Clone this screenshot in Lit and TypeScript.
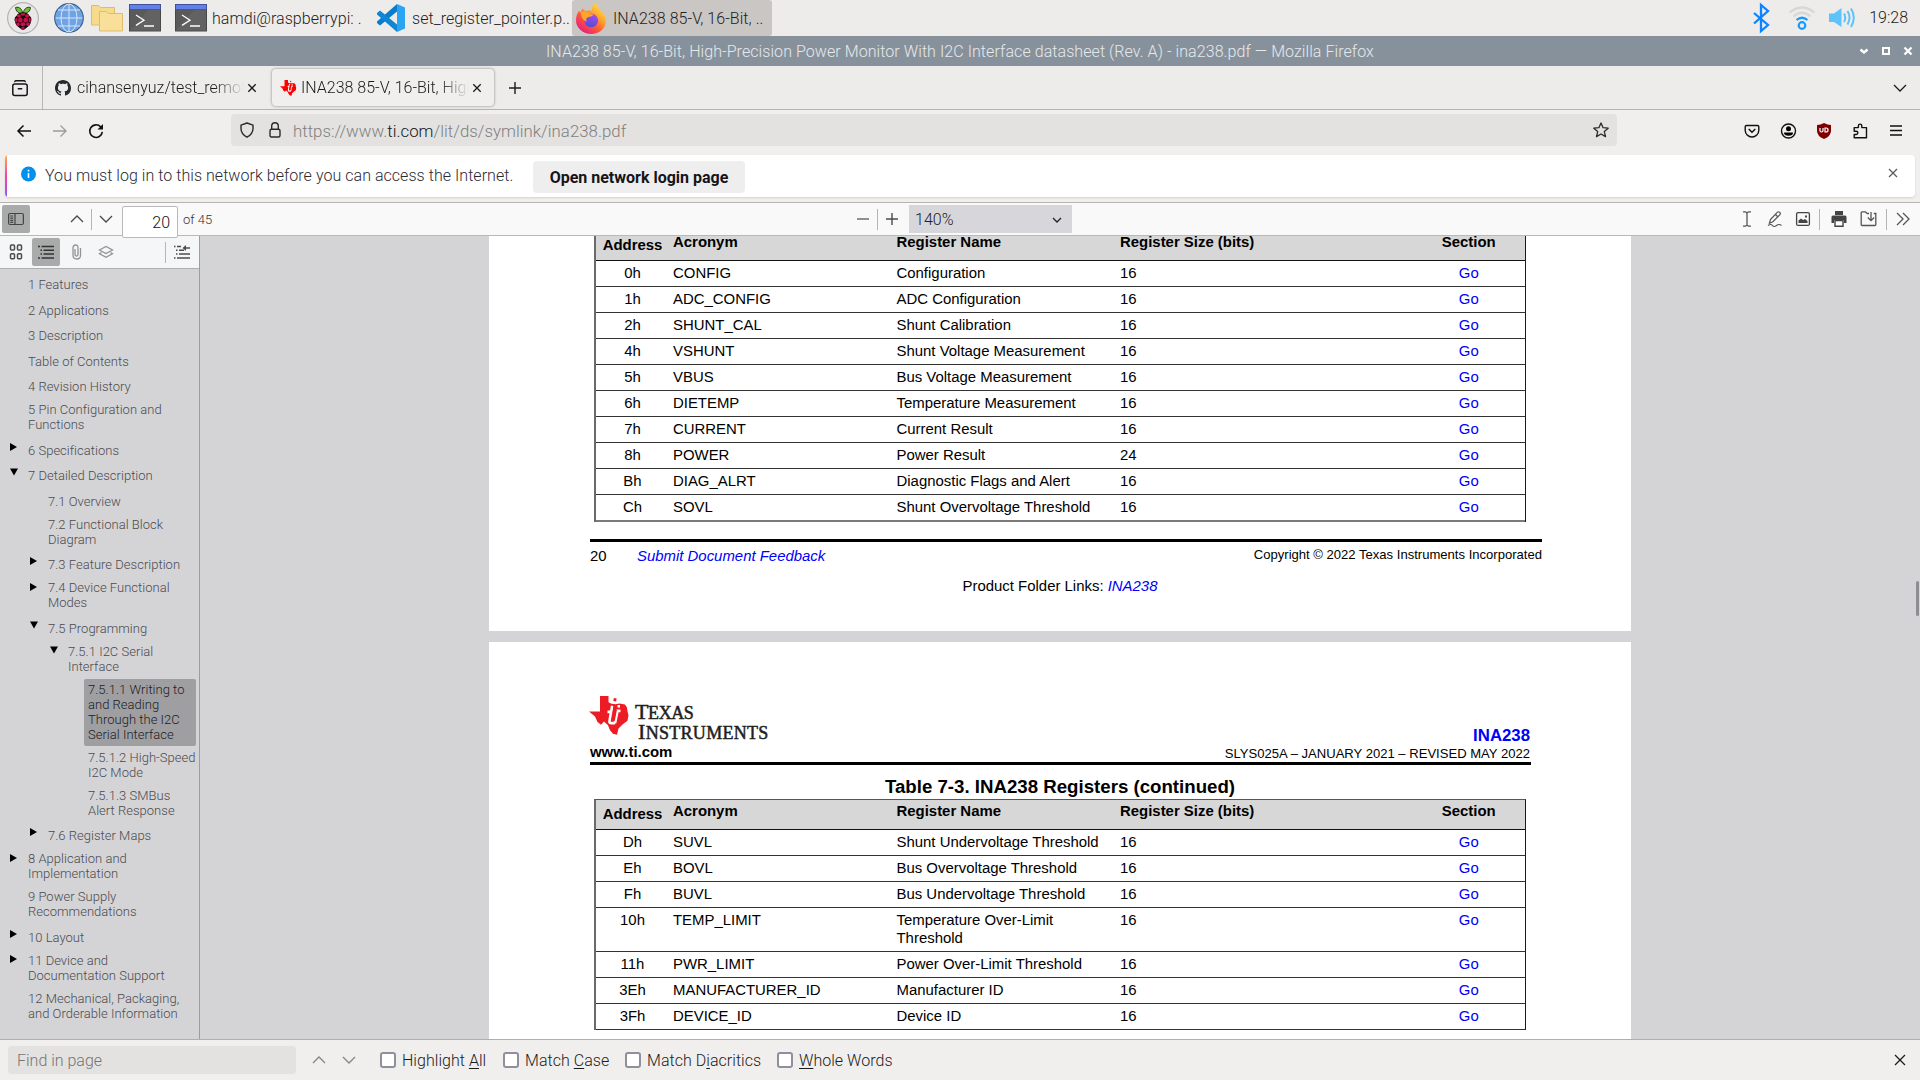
import { LitElement, html, svg, css, nothing } from "lit";
import { customElement } from "lit/decorators.js";
import { classMap } from "lit/directives/class-map.js";

type Row = [string, string, string, string];

const firstPageRows: Row[] = [
  ["0h", "CONFIG", "Configuration", "16"],
  ["1h", "ADC_CONFIG", "ADC Configuration", "16"],
  ["2h", "SHUNT_CAL", "Shunt Calibration", "16"],
  ["4h", "VSHUNT", "Shunt Voltage Measurement", "16"],
  ["5h", "VBUS", "Bus Voltage Measurement", "16"],
  ["6h", "DIETEMP", "Temperature Measurement", "16"],
  ["7h", "CURRENT", "Current Result", "16"],
  ["8h", "POWER", "Power Result", "24"],
  ["Bh", "DIAG_ALRT", "Diagnostic Flags and Alert", "16"],
  ["Ch", "SOVL", "Shunt Overvoltage Threshold", "16"],
];

const secondPageRows: Row[] = [
  ["Dh", "SUVL", "Shunt Undervoltage Threshold", "16"],
  ["Eh", "BOVL", "Bus Overvoltage Threshold", "16"],
  ["Fh", "BUVL", "Bus Undervoltage Threshold", "16"],
  ["10h", "TEMP_LIMIT", "Temperature Over-Limit\nThreshold", "16"],
  ["11h", "PWR_LIMIT", "Power Over-Limit Threshold", "16"],
  ["3Eh", "MANUFACTURER_ID", "Manufacturer ID", "16"],
  ["3Fh", "DEVICE_ID", "Device ID", "16"],
];

interface OutlineItem {
  text: string;
  level: number;
  arrow?: "right" | "down";
  selected?: boolean;
}

const outline: OutlineItem[] = [
  { text: "1 Features", level: 0 },
  { text: "2 Applications", level: 0 },
  { text: "3 Description", level: 0 },
  { text: "Table of Contents", level: 0 },
  { text: "4 Revision History", level: 0 },
  { text: "5 Pin Configuration and\nFunctions", level: 0 },
  { text: "6 Specifications", level: 0, arrow: "right" },
  { text: "7 Detailed Description", level: 0, arrow: "down" },
  { text: "7.1 Overview", level: 1 },
  { text: "7.2 Functional Block\nDiagram", level: 1 },
  { text: "7.3 Feature Description", level: 1, arrow: "right" },
  { text: "7.4 Device Functional\nModes", level: 1, arrow: "right" },
  { text: "7.5 Programming", level: 1, arrow: "down" },
  { text: "7.5.1 I2C Serial\nInterface", level: 2, arrow: "down" },
  { text: "7.5.1.1 Writing to\nand Reading\nThrough the I2C\nSerial Interface", level: 3, selected: true },
  { text: "7.5.1.2 High-Speed\nI2C Mode", level: 3 },
  { text: "7.5.1.3 SMBus\nAlert Response", level: 3 },
  { text: "7.6 Register Maps", level: 1, arrow: "right" },
  { text: "8 Application and\nImplementation", level: 0, arrow: "right" },
  { text: "9 Power Supply\nRecommendations", level: 0 },
  { text: "10 Layout", level: 0, arrow: "right" },
  { text: "11 Device and\nDocumentation Support", level: 0, arrow: "right" },
  { text: "12 Mechanical, Packaging,\nand Orderable Information", level: 0 },
];

const icon = (size: number, body: unknown, cls = "") =>
  html`<svg class="ic ${cls}" width=${size} height=${size} viewBox="0 0 ${size} ${size}">${body}</svg>`;

const raspberry = icon(32, svg`
  <circle cx="16" cy="16" r="15.4" fill="#e9e8e8" stroke="#b4b4b6" stroke-width="1.2"/>
  <g stroke="#11220a" stroke-width=".8" fill="#6cbf3b">
    <path d="M15.6 11.6C12 12 8.400 9 8.600 5.400C12 4.600 15.400 6.600 15.600 11.600z"/>
    <path d="M16.400 11.600C20 12 23.600 9 23.400 5.400C20 4.600 16.600 6.600 16.400 11.600z"/>
  </g>
  <path d="M16 10.200c3 0 5.600 1.200 6.400 3.600 2.200 1.200 2.600 4 1.500 6-.2 3-2.400 4.600-4 5.600-1.200.9-2.500 2.400-3.900 2.400s-2.700-1.500-3.900-2.400c-1.600-1-3.800-2.600-4-5.600-1.100-2-.7-4.800 1.500-6 .8-2.400 3.400-3.600 6.400-3.600z" fill="#14080c"/>
  <g fill="#c7114a">
    <ellipse cx="16" cy="12.300" rx="2.400" ry="1.400"/><ellipse cx="11.900" cy="14" rx="2.100" ry="1.700"/><ellipse cx="20.100" cy="14" rx="2.100" ry="1.700"/>
    <ellipse cx="13.300" cy="18" rx="2.400" ry="2.500"/><ellipse cx="18.700" cy="18" rx="2.400" ry="2.500"/>
    <ellipse cx="9.300" cy="18" rx="1.200" ry="2.300"/><ellipse cx="22.700" cy="18" rx="1.200" ry="2.300"/>
    <ellipse cx="11" cy="22.200" rx="1.700" ry="2"/><ellipse cx="21" cy="22.200" rx="1.700" ry="2"/>
    <ellipse cx="16" cy="22.300" rx="2.500" ry="2.100"/><ellipse cx="16" cy="26" rx="1.900" ry="1.100"/>
  </g>`);

const globe = icon(30, svg`
  <circle cx="15" cy="15" r="14.300" fill="#6fa4e4" stroke="#40618f" stroke-width="1.200"/>
  <g fill="none" stroke="#d6e6fa" stroke-width="1">
    <path d="M15 1v28M1.500 15h27M4 7h22M4 23h22"/>
    <ellipse cx="15" cy="15" rx="8" ry="14"/>
  </g>`);

const folders = icon(32, svg`
  <g fill="#f6db8c" stroke="#dfbc6c" stroke-width="1">
    <path d="M.5 3.500h7l2 2h14v17.500h-23z"/>
    <path d="M8.500 9.500h7l2 2h14v17.500h-23z" fill="#f9e09a"/>
  </g>`);

const terminal = icon(32, svg`
  <rect x=".5" y="2.500" width="31" height="26.500" fill="#5a5a5a" stroke="#484848"/>
  <path d="M1 28.500L20 7h11v21.500z" fill="#626262"/>
  <rect x=".5" y="2.500" width="31" height="5" fill="#6080ee" stroke="#3d4f96" stroke-width=".8"/>
  <path d="M7 13l8 5.200-8 5.200M15 24h10" fill="none" stroke="#fff" stroke-width="1.300"/>`);

const vscode = icon(30, svg`
  <path d="M21 1l8 3.500v21L21 29z" fill="#2aa5f2"/>
  <path d="M21 1v7.500L4 22.500 1 20v-1.500z" fill="#0a7ccb"/>
  <path d="M21 29v-7.500L4 7.500 1 10v1.500z" fill="#0d86d6"/>`);

const firefox = icon(32, svg`
  <defs>
    <linearGradient id="ffa" x1="1" y1="0" x2=".2" y2="1"><stop offset="0" stop-color="#fff44f"/><stop offset=".35" stop-color="#ffb22e"/><stop offset=".65" stop-color="#ff5a36"/><stop offset="1" stop-color="#e31587"/></linearGradient>
    <linearGradient id="ffb" x1=".7" y1="0" x2=".3" y2="1"><stop offset="0" stop-color="#a94be8"/><stop offset="1" stop-color="#4b4ed8"/></linearGradient>
  </defs>
  <path d="M20 .8c2.300 1.700 3.600 4.500 4 6.800 4 2.500 7 6.200 7 11.200C31 26.500 24.500 32 16.300 32S1 26.300 1 18.300C1 14 2.500 10.700 4.500 8.500c0 1 .3 1.700.9 2.300L7.500 6.500c.8 1.200 2 2.200 3.700 2.500 2-.6 4-.5 5.500 0C17 5.500 18 2.800 20 .8z" fill="url(#ffa)"/>
  <circle cx="16.300" cy="18.500" r="6.800" fill="url(#ffb)"/>
  <path d="M6 10c3-1.500 7-.5 8.500 1.500l4 1.200c-1 1.500-3 2-5 2.300-2.500.6-3 3-1.500 5-4-1.500-6-5-6-10z" fill="#ffa52c"/>`);

const bluetooth = icon(28, svg`<path d="M7 9l14 12-7 6V1l7 6L7 19.500" fill="none" stroke="#0a84ff" stroke-width="2.300"/>`);
const wifi = icon(28, svg`
  <g fill="none" stroke-width="2.200">
    <path d="M1.500 8.500Q14-1.500 26.500 8.500" stroke="#d8d7d5"/><path d="M5.500 12.500Q14 5 22.500 12.500" stroke="#d8d7d5"/>
    <path d="M8.500 16q5.500-4.500 11 0" stroke="#159bff"/><circle cx="14" cy="21.500" r="3.300" stroke="#159bff"/>
  </g>`);
const speaker = icon(28, svg`
  <path d="M1 9.500h5L13.500 4v19L6 18H1z" fill="#5cc3fb"/>
  <path d="M16 9.500q2.500 4.300 0 8.500M19.500 7q4 6.500 0 13.500M23 4.500q5.500 9 0 18.500" fill="none" stroke="#5cc3fb" stroke-width="2"/>`);

const chevron = (dir: "up" | "down", size = 16) =>
  icon(16, svg`<path d=${dir === "down" ? `M${8 - size / 2} ${8 - size / 4}l${size / 2} ${size / 2} ${size / 2}-${size / 2}` : `M${8 - size / 2} ${8 + size / 4}l${size / 2}-${size / 2} ${size / 2} ${size / 2}`} fill="none" stroke="currentColor" stroke-width="1.300"/>`);

const cross = (r: number) =>
  icon(16, svg`<path d="M${8 - r} ${8 - r}L${8 + r} ${8 + r}M${8 + r} ${8 - r}L${8 - r} ${8 + r}" stroke="currentColor" stroke-width="1.300"/>`);

const plus = icon(16, svg`<path d="M2 8h12M8 2v12" stroke="currentColor" stroke-width="1.400"/>`);
const minus = icon(16, svg`<path d="M2 8h12" stroke="currentColor" stroke-width="1.200"/>`);

const github = icon(16, svg`<path fill="#24292f" d="M8 0C3.580 0 0 3.580 0 8c0 3.540 2.290 6.530 5.470 7.590.4.070.550-.170.550-.380 0-.190-.010-.820-.010-1.490-2.010.370-2.530-.490-2.690-.940-.090-.230-.480-.940-.820-1.130-.280-.150-.680-.520-.010-.530.630-.010 1.080.580 1.230.820.720 1.210 1.870.870 2.330.660.070-.520.280-.870.510-1.070-1.780-.200-3.640-.890-3.640-3.950 0-.870.310-1.590.820-2.150-.080-.200-.360-1.020.080-2.120 0 0 .670-.210 2.200.820.640-.180 1.320-.270 2-.270s1.360.090 2 .270c1.530-1.040 2.200-.820 2.200-.820.440 1.100.160 1.920.080 2.120.510.560.820 1.270.820 2.150 0 3.070-1.870 3.750-3.650 3.950.290.250.540.730.540 1.480 0 1.070-.010 1.930-.010 2.200 0 .210.150.460.550.380A8.010 8.010 0 0 0 16 8c0-4.420-3.580-8-8-8z"/>`);

/* Outline of the state of Texas carrying the "ti" mark. */
const texas = (w: number, h: number, red: string) => html`<svg class="ic" width=${w} height=${h} viewBox="0 0 39 38" preserveAspectRatio="none">
  <path fill=${red} d="M11 0h8.500v6l3 1.500 4 .5 4-.800 5.500 1 2 3 .5 4 1 3.500-1 5.500-5 3.500-4 4-1.500 6-4-.8-3-3.500-2-5-4-3.500-3 3-3.500-2.500L6 20l-6-5h11z"/>
  <path fill="none" stroke="#fff" stroke-width="2.600" d="M23.200 9.500l-2.700 14.500q-.5 2.500 2 2.500h3.500M18.500 15.500h4M31 10h-2.500M31.500 14.500h-3l-2.500 12"/>
  <path fill="none" stroke=${red} stroke-width="1.400" d="M25.500 9l-2.300 14.500h2l2-10"/>
  <path fill="none" stroke=${red} stroke-width="2.800" d="M26.200 2.200l-.5 3"/>
</svg>`;

@customElement("app-root")
export class AppRoot extends LitElement {
  static styles = css`
    :host {
      display: flex;
      flex-direction: column;
      width: 1920px;
      height: 1080px;
      overflow: hidden;
      box-sizing: border-box;
      font: 300 16px/20px Roboto, "Liberation Sans", sans-serif;
      color: #1b1b1c;
      background: #f0efed;
      white-space: nowrap;
    }
    * { box-sizing: border-box; }
    .ic { display: block; flex: none; overflow: visible; }
    .grow { flex: 1; }

    .taskbar { height: 36px; flex: none; display: flex; align-items: center; background: #edecea; padding: 0 12px 0 7px; color: #222; }
    .launch { display: flex; align-items: center; width: 168px; flex: none; }
    .slot1 { width: 47px; } .slot2 { width: 37px; } .slot3 { width: 38px; }
    .task { display: flex; align-items: center; height: 36px; gap: 5px; flex: none; }
    .task.t1 { width: 200px; }
    .task.t2 { width: 197px; padding-left: 1px; gap: 6px; }
    .task.t3 { width: 200px; padding-left: 3px; gap: 6px; background: #cac6c3; border-radius: 3px; }
    .task span { position: relative; top: 1px; letter-spacing: .05px; }
    .tray { display: flex; align-items: center; }
    .tray .w1 { width: 41px; } .tray .w2 { width: 40px; } .tray .w3 { width: 41px; }

    .titlebar { height: 30px; flex: none; background: #87919b; color: #e6e9ec; display: grid; grid-template-columns: 100px 1fr 100px; align-items: center; }
    .titlebar .name { text-align: center; padding-top: 1px; letter-spacing: .073px; }
    .wm { display: flex; justify-content: flex-end; gap: 6px; padding-right: 4px; color: #fff; }

    .tabs { height: 44px; flex: none; display: flex; align-items: center; background: #edecea; border-bottom: 1px solid #b4b3af; }
    .recent { width: 43px; height: 43px; border-right: 1px solid #b8b7b5; padding: 14px 0 0 12px; flex: none; }
    .tab { height: 37px; display: flex; align-items: center; flex: none; border-radius: 4px; }
    .tab.idle { width: 229px; padding-left: 12px; }
    .tab.on { width: 222px; padding-left: 8px; background: #f0efee; box-shadow: 0 0 3px rgba(0,0,0,.45); }
    .tab .label { width: 167px; margin-left: 6px; padding-top: 1px; overflow: hidden; -webkit-mask-image: linear-gradient(to right, #000 82%, transparent); mask-image: linear-gradient(to right, #000 82%, transparent); }
    .tab.on .label { width: 168px; margin-left: 5px; }
    .tabs .new { margin-left: 13px; }
    .tabs .all { margin-right: 12px; }

    .nav { height: 45px; flex: none; display: flex; align-items: flex-start; padding: 4px 16px 0; background: #f0efed; }
    .nav .btn { height: 33px; display: flex; align-items: center; width: 36px; flex: none; }
    .nav .btn.dim { color: #9d9c9b; }
    .url { margin-left: 107px; width: 1386px; height: 32px; border-radius: 4px; background: #e3e2e0; display: flex; align-items: center; padding: 0 8px; flex: none; color: #222; }
    .url .addr { margin-left: 10px; padding-top: 2px; font-size: 16.800px; letter-spacing: .03px; color: #807f7e; }
    .url b { font-weight: 300; color: #151515; }
    .url .lock { margin-left: 12px; }
    .nav .side { margin-left: 127px; display: flex; }

    .notice { margin: 0 5px; width: 1910px; height: 42px; flex: none; display: flex; background: #fff; border-radius: 4px; box-shadow: 0 1px 2px rgba(0,0,0,.12); overflow: hidden; }
    .stripe { width: 2px; background: linear-gradient(#ffb04a, #fa3fa0 50%, #9059ff); }
    .notice .info { margin: 11px 0 0 14px; }
    .notice .msg { margin: 11px 0 0 8px; width: 488px; color: #2b2a33; font-size: 16px; letter-spacing: .045px; flex: none; }
    .notice .login { margin-top: 6px; width: 212px; height: 32px; border-radius: 4px; background: #eeeeee; text-align: center; line-height: 33px; font-weight: 700; font-size: 16px; color: #15141a; }
    .notice .x { margin: 10px 14px 0 0; color: #5b5b60; }

    .viewer { margin-top: 5px; height: 837px; flex: none; border-top: 1px solid #b5b5ae; display: flex; flex-direction: column; }
    .pdfbar { height: 33px; flex: none; display: flex; align-items: center; background: #f9f9fa; border-bottom: 1px solid #b8b8b8; padding: 0 9px 0 2px; color: #4a4a4a; position: relative; z-index: 2; }
    .toggle { width: 28px; height: 28px; background: #a9aaaa; border-radius: 2px; display: grid; place-items: center; }
    .pdfbar .up { margin-left: 39px; }
    .sep { width: 1px; height: 21px; background: #b5b5b8; flex: none; }
    .page-no { margin-left: 8px; width: 56px; height: 32px; align-self: flex-start; margin-top: 3px; margin-bottom: -3px; border: 1px solid #b9b9bb; border-radius: 2px; background: #fff; text-align: right; padding: 6px 7px 0 0; color: #111; flex: none; font-size: 16px; }
    .of { margin-left: 5px; padding-top: 2px; font-size: 13px; color: #333; width: 672px; }
    .zoom { margin-left: 9px; width: 163px; height: 28px; background: #d7d7db; display: flex; align-items: center; justify-content: space-between; padding: 1px 7px 0 6px; color: #222; }
    .pdfbar .tools { display: flex; align-items: center; }
    .gap6 { margin-left: 6px; } .gap8 { margin-left: 8px; } .gap11 { margin-left: 11px; } .gap12 { margin-left: 12px; } .gap13 { margin-left: 13px; } .gap14 { margin-left: 14px; }

    .body { flex: 1; display: flex; min-height: 0; background: #d4d4d7; }
    .sidebar { width: 200px; flex: none; border-right: 1px solid #9d9da0; display: flex; flex-direction: column; }
    .sidebar-bar { height: 33px; flex: none; border-bottom: 1px solid #aeafb1; background: #f5f6f7; display: flex; align-items: center; color: #4c4c4c; padding: 0 9px 0 8px; }
    .sidebar-bar .toggle { margin-left: 8px; }
    .tree { display: flex; flex-direction: column; padding-top: 3px; font-size: 13px; line-height: 15px; color: #4b4b4e; white-space: pre; }
    .node { display: flex; padding-bottom: .5px; flex: none; }
    .node.l0 { padding-left: 8px; } .node.l1 { padding-left: 28px; } .node.l2 { padding-left: 48px; } .node.l3 { padding-left: 68px; }
    .arrow { width: 16px; flex: none; padding: 5px 0 0 2px; color: #000; }
    .node a { flex: 1; padding: 5px 0 5px 4px; margin-right: 3px; border-radius: 2px; letter-spacing: .02px; }
    .node.multi a { padding: 2.500px 0 4.500px 4px; margin-bottom: .5px; }
    .node.sel a { background: #9f9fa2; color: #202022; height: 67px; }

    .canvas { flex: 1; display: flex; flex-direction: column; align-items: center; gap: 11px; position: relative; font-family: "Liberation Sans", Arial, sans-serif; font-weight: 400; color: #000; overflow: hidden; font-size: 14.930px; line-height: 18px; }
    .page { width: 1142px; background: #fff; flex: none; }
    .p1 { height: 395px; padding: 0 0 0 101px; }
    .p2 { height: 397px; padding: 54px 0 0 101px; overflow: hidden; }
    .thumb { position: absolute; right: 1px; top: 345px; width: 3px; height: 35px; border-radius: 2px; background: #8e8e92; }
    .table { width: 932px; margin-left: 4px; border: solid #1a1a1a; border-width: 0 1px 0 2px; border-left-color: #6a6a6a; }
    .p2 .table { border-top: 1px solid #555; }
    .tr { display: grid; grid-template-columns: 73px 223.500px 223.500px 296.500px 1fr; height: 26px; border-bottom: 1px solid #333; padding-top: 3px; flex: none; }
    .p1 .tr:last-child { height: 27px; border-bottom: 2px solid #7a7a7a; }
    .tr > * { padding-left: 4px; white-space: pre; }
    .tr > :first-child { text-align: center; padding-left: 0; }
    .tr > :last-child { text-align: center; padding-left: 0; color: #0000fa; }
    .tr.tall { height: 44px; }
    .tr.th { font-weight: 700; background: #d7d7d7; height: 25px; padding-top: 0; border-color: #111; }
    .tr.th > :last-child { color: #000; }
    .p1 .th > * { margin-top: -3px; }
    .p1 .th > :first-child { margin-top: 0; }
    .p2 .tr.th { height: 30px; padding-top: 2px; }
    .p2 .th > :first-child { margin-top: 3px; }
    .rule { height: 3px; background: #000; }
    .p1 .rule { width: 952px; margin-top: 17px; }
    .foot { width: 952px; display: flex; padding-top: 5px; }
    .foot .n { width: 47px; }
    .foot .copy { font-size: 13.070px; margin-top: -1px; }
    .blue { color: #0000fa; }
    .it { font-style: italic; }
    .links { width: 940px; text-align: center; margin-top: 12px; }

    .brand { width: 941px; height: 66px; display: flex; justify-content: space-between; padding-right: 1px; }
    .logo { display: flex; height: 44px; margin-left: -1px; }
    .logo .words { font: 400 22px/20px "Liberation Serif", serif; color: #231f20; margin: 6px 0 0 7px; -webkit-text-stroke: .5px #231f20; letter-spacing: .2px; }
    .logo .small { font-size: 18px; }
    .logo .first { letter-spacing: -.4px; }
    .logo .second { margin: -1px 0 0 3px; letter-spacing: .3px; }
    .site { font-weight: 700; margin-top: 3px; }
    .docref { text-align: right; padding-top: 31px; font-size: 13.070px; }
    .docref b { display: block; font-size: 16.800px; line-height: 18px; }
    .p2 .rule { width: 941px; }
    .caption { width: 940px; text-align: center; font-weight: 700; font-size: 18.670px; line-height: 22px; padding-top: 11px; height: 34px; }

    .find { height: 41px; flex: none; border-top: 1px solid #b0afab; background: #f0efed; display: flex; align-items: center; padding: 0 12px 0 8px; }
    .find .box { width: 288px; height: 28px; border-radius: 4px; background: #e3e2e0; color: #767574; padding: 5px 9px; }
    .find .arrows { display: flex; gap: 14px; margin-left: 15px; width: 69px; color: #868584; }
    .check { display: flex; align-items: center; gap: 6px; letter-spacing: .04px; }
    .check i { width: 16px; height: 16px; border: 2px solid #8f8f9d; border-radius: 3px; background: #fff; }
    .check span { padding-top: 2px; }
    .c1 { width: 123px; } .c2 { width: 122px; } .c3 { width: 152px; }
    .check u { text-underline-offset: 2px; text-decoration-thickness: 1px; }
  `;

  private node(item: OutlineItem) {
    const multi = item.text.includes("\n");
    const arrow = item.arrow === "right"
      ? html`<svg class="ic" width="8" height="8"><path d="M0 0l7 4-7 4z" fill="#000"/></svg>`
      : item.arrow === "down"
        ? html`<svg class="ic" width="8" height="8"><path d="M0 .5h8l-4 7z" fill="#000"/></svg>`
        : nothing;
    return html`<div class=${classMap({ node: true, multi, sel: !!item.selected, ["l" + item.level]: true })}><span class="arrow">${arrow}</span><a>${item.text}</a></div>`;
  }

  private table(rows: Row[]) {
    return html`<div class="table">
      <div class="tr th"><span>Address</span><span>Acronym</span><span>Register Name</span><span>Register Size (bits)</span><span>Section</span></div>
      ${rows.map((r) => html`<div class=${classMap({ tr: true, tall: r[2].includes("\n") })}><span>${r[0]}</span><span>${r[1]}</span><span>${r[2]}</span><span>${r[3]}</span><span>Go</span></div>`)}
    </div>`;
  }

  render() {
    return html`
      <div class="taskbar">
        <div class="launch">
          <div class="slot1">${raspberry}</div><div class="slot2">${globe}</div><div class="slot3">${folders}</div>${terminal}
        </div>
        <div class="task t1">${terminal}<span>hamdi@raspberrypi: .</span></div>
        <div class="task t2">${vscode}<span>set_register_pointer.p..</span></div>
        <div class="task t3">${firefox}<span>INA238 85-V, 16-Bit, ..</span></div>
        <div class="grow"></div>
        <div class="tray">
          <div class="w1">${bluetooth}</div><div class="w2">${wifi}</div><div class="w3">${speaker}</div><span>19:28</span>
        </div>
      </div>

      <div class="titlebar">
        <span></span>
        <span class="name">INA238 85-V, 16-Bit, High-Precision Power Monitor With I2C Interface datasheet (Rev. A) - ina238.pdf — Mozilla Firefox</span>
        <div class="wm">
          ${icon(16, svg`<path d="M4.500 6.500L8 9.500l3.500-3" fill="none" stroke="#fff" stroke-width="2.400"/>`)}
          ${icon(16, svg`<rect x="5" y="5" width="6" height="6" fill="none" stroke="#fff" stroke-width="2"/>`)}
          ${icon(16, svg`<path d="M4.500 4.500l7 7M11.500 4.500l-7 7" stroke="#fff" stroke-width="2.200"/>`)}
        </div>
      </div>

      <div class="tabs">
        <div class="recent">${icon(16, svg`<g fill="none" stroke="#15141a" stroke-width="1.500" stroke-linecap="round"><path d="M2.800 1.500Q3.200.8 4 .8h8q.8 0 1.200.7"/><rect x=".8" y="4" width="14.400" height="11.400" rx="2"/><path d="M6.300 8.700h3.400"/></g>`)}</div>
        <div class="tab idle">${github}<span class="label">cihansenyuz/test_remote</span>${cross(3.700)}</div>
        <div class="tab on">${texas(16, 16, "#f00")}<span class="label">INA238 85-V, 16-Bit, High-P</span>${cross(3.700)}</div>
        <div class="new">${plus}</div>
        <div class="grow"></div>
        <div class="all">${chevron("down", 12)}</div>
      </div>

      <div class="nav">
        <div class="btn">${icon(16, svg`<path d="M15 8H2M7.500 2.500L2 8l5.500 5.500" fill="none" stroke="#111" stroke-width="1.500"/>`)}</div>
        <div class="btn dim">${icon(16, svg`<path d="M1 8h13M8.500 2.500L14 8l-5.500 5.500" fill="none" stroke="currentColor" stroke-width="1.300"/>`)}</div>
        <div class="btn">${icon(16, svg`<path d="M12.800 4A6.300 6.300 0 1 0 14.300 8.800" fill="none" stroke="#111" stroke-width="1.600"/><path d="M15 1v5.500H9.500z" fill="#111"/>`)}</div>
        <div class="url">
          ${icon(16, svg`<path d="M8 1l6 2.200v3.300c0 3.700-2.300 6.700-6 8.700-3.700-2-6-5-6-8.700V3.200z" fill="none" stroke="#2a2a2a" stroke-width="1.400" stroke-linejoin="round"/>`)}
          <div class="lock">${icon(16, svg`<rect x="3" y="7.300" width="10" height="7.700" rx="1.500" fill="none" stroke="#2a2a2a" stroke-width="1.400"/><path d="M4.700 7V4a3.300 3.300 0 0 1 6.600 0v3" fill="none" stroke="#2a2a2a" stroke-width="1.400"/>`)}</div>
          <span class="addr">https://www.<b>ti.com</b>/lit/ds/symlink/ina238.pdf</span>
          <div class="grow"></div>
          ${icon(16, svg`<path d="M8 1l2.100 4.700 5.100.5-3.900 3.400 1.200 5L8 12l-4.500 2.600 1.200-5L.8 6.200l5.100-.5z" fill="none" stroke="#2a2a2a" stroke-width="1.300" stroke-linejoin="round"/>`)}
        </div>
        <div class="side">
          <div class="btn">${icon(16, svg`<path d="M2.500 2.500h11q1.300 0 1.300 1.300v3.400a6.800 6.800 0 0 1-13.600 0V3.800q0-1.300 1.300-1.300z" fill="none" stroke="#111" stroke-width="1.400"/><path d="M4.700 6L8 9.200 11.300 6" fill="none" stroke="#111" stroke-width="1.500"/>`)}</div>
          <div class="btn">${icon(16, svg`<circle cx="8.500" cy="8" r="7" fill="none" stroke="#111" stroke-width="1.400"/><circle cx="8.500" cy="5.800" r="2.500"/><path d="M4 9.500h9q0 3.300-4.500 3.300T4 9.500z"/>`)}</div>
          <div class="btn">${icon(16, svg`<path d="M8 0q3.500 2 7 2v6q0 5-7 8Q1 13 1 8V2q3.500 0 7-2z" fill="#800000"/><path d="M4 5v2.500q0 1.500 1.500 1.500T7 7.500V5M9 5v4h1q2 0 2-2t-2-2z" fill="none" stroke="#fff" stroke-width="1.200"/>`)}</div>
          <div class="btn">${icon(16, svg`<path d="M2.200 14.800V11.500h2a1.600 1.600 0 0 0 0-3.300h-2V4.600h4.200V2.800a1.700 1.700 0 0 1 3.400 0v1.800h4.700v10.200z" fill="none" stroke="#111" stroke-width="1.400" stroke-linejoin="round"/>`)}</div>
          <div class="btn">${icon(16, svg`<path d="M2 3h12M2 7.500h12M2 12h12" stroke="#111" stroke-width="1.400"/>`)}</div>
        </div>
      </div>

      <div class="notice">
        <div class="stripe"></div>
        <div class="info">${icon(16, svg`<circle cx="7.500" cy="8" r="7.500" fill="#0090ed"/><path d="M7.500 7v5M7.500 3.800v1.700" stroke="#fff" stroke-width="1.600"/>`)}</div>
        <span class="msg">You must log in to this network before you can access the Internet.</span>
        <div class="login">Open network login page</div>
        <div class="grow"></div>
        <div class="x">${cross(4)}</div>
      </div>

      <div class="viewer">
        <div class="pdfbar">
          <div class="toggle">${icon(16, svg`<g fill="none" stroke="#444" stroke-width="1.200"><rect x=".6" y="2.500" width="14.800" height="11" rx="1.500"/><path d="M7 2.500v11M2.200 5h3M2.200 7.200h3M2.200 9.400h3M2.200 11.400h3"/></g>`)}</div>
          <div class="up">${chevron("up", 12)}</div>
          <div class="sep gap6"></div>
          <div class="gap6">${chevron("down", 12)}</div>
          <div class="page-no">20</div>
          <div class="of">of 45</div>
          ${minus}<div class="sep gap6"></div><div class="gap6">${plus}</div>
          <div class="zoom"><span>140%</span>${chevron("down", 8)}</div>
          <div class="grow"></div>
          <div class="tools">
            ${icon(16, svg`<path d="M4 .8h2.500L8 2l1.500-1.200H12M4 15.200h2.500L8 14l1.500 1.200H12M8 2v12" fill="none" stroke="#555" stroke-width="1.300"/>`)}
            <div class="gap12">${icon(16, svg`<path d="M3.500 8.500l7-7.300q1-1 2.200.2t.2 2.300l-7 7-3.500 1.500zM8.500 3.500l2.500 2.500M1 14.500q3-2 4.500 0t4 0 5 0" fill="none" stroke="#555" stroke-width="1.200"/>`)}</div>
            <div class="gap12">${icon(16, svg`<rect x="1.600" y="1.600" width="12.800" height="12.800" rx="1.500" fill="none" stroke="#444" stroke-width="1.300"/><path d="M3.500 12V9.500L6 7.500l2 1.500 2-1 2.500 2V12z" fill="#444"/><rect x="10" y="4.500" width="2" height="2" fill="#444"/>`)}</div>
            <div class="sep gap8"></div>
            <div class="gap11">${icon(16, svg`<path d="M4 0h8v4H4zM2 4.500h12q1.500 0 1.500 1.500v6H13V9H3v3H.5V6Q.5 4.500 2 4.500z" fill="#444"/><path d="M4 9.500h8v5.800H4z" fill="#fff" stroke="#444" stroke-width="1.400"/>`)}</div>
            <div class="gap13">${icon(18, svg`<path d="M7 3.500L5.500 1.800H2Q1.200 1.800 1.200 3v11.500q0 1 1 1h12.600q1 0 1-1V3.500h-2M7 3.500h2M11 2v8.500M7.800 7.500L11 10.700l3.200-3.200" fill="none" stroke="#555" stroke-width="1.300"/>`)}</div>
            <div class="sep gap8"></div>
            <div class="gap8">${icon(16, svg`<path d="M2 2l6 6-6 6M8 2l6 6-6 6" fill="none" stroke="#555" stroke-width="1.300"/>`)}</div>
          </div>
        </div>

        <div class="body">
          <div class="sidebar">
            <div class="sidebar-bar">
              ${icon(16, svg`<g fill="none" stroke="#4c4c4c" stroke-width="1.500"><rect x="2.500" y="1" width="4" height="5" rx="1"/><rect x="9.500" y="1" width="4" height="5" rx="1"/><rect x="2.500" y="9.800" width="4" height="5" rx="1"/><rect x="9.500" y="9.800" width="4" height="5" rx="1"/></g>`)}
              <div class="toggle">${icon(16, svg`<path d="M3.500 2.500H16M5.500 6.200H16M5.500 10H16M3.500 14H16" stroke="#333" stroke-width="1.500"/><path d="M0 2.500h2M2.500 6.200h1.500M2.500 10h1.500M0 14h2" stroke="#333" stroke-width="1.500"/>`)}</div>
              <div class="gap8">${icon(16, svg`<path d="M6.500 5v5.500q0 1.500 1.500 1.500t1.500-1.500V3.500Q9.500 1 7.200 1T4.500 3.500v7.500q0 4 3.800 4t3.700-4V4" fill="none" stroke="#929395" stroke-width="1.300" transform="translate(.5 0)"/>`)}</div>
              <div class="gap14">${icon(16, svg`<path d="M1.500 6L8 2.500 14.500 6 8 9.500zM3.500 8.500l-2 1.200L8 13.300l6.500-3.600-2-1.200" fill="none" stroke="#929395" stroke-width="1.300"/>`)}</div>
              <div class="grow"></div>
              <div class="sep"></div>
              <div class="gap8">${icon(16, svg`<path d="M3 2.500h4M5 6.200h5M5 10h11M3 14h13" stroke="#4c4c4c" stroke-width="1.400"/><path d="M0 2.500h1.500M2 6.200h1.500M2 10h1.500M0 14h1.500M10 4h6" stroke="#4c4c4c" stroke-width="1.400"/><path d="M12 1v6L8.500 4z" fill="#4c4c4c"/>`)}</div>
            </div>
            <div class="tree">${outline.map((o) => this.node(o))}</div>
          </div>

          <div class="canvas">
            <div class="page p1">
              ${this.table(firstPageRows)}
              <div class="rule"></div>
              <div class="foot"><span class="n">20</span><span class="blue it">Submit Document Feedback</span><span class="grow"></span><span class="copy">Copyright © 2022 Texas Instruments Incorporated</span></div>
              <div class="links">Product Folder Links: <span class="blue it">INA238</span></div>
            </div>
            <div class="page p2">
              <div class="brand">
                <div>
                  <div class="logo">${texas(39, 39, "#ed1c24")}
                    <div class="words"><div class="first">T<span class="small">EXAS</span></div><div class="second">I<span class="small">NSTRUMENTS</span></div></div>
                  </div>
                  <div class="site">www.ti.com</div>
                </div>
                <div class="docref"><b class="blue">INA238</b>SLYS025A – JANUARY 2021 – REVISED MAY 2022</div>
              </div>
              <div class="rule"></div>
              <div class="caption">Table 7-3. INA238 Registers (continued)</div>
              ${this.table(secondPageRows)}
            </div>
            <div class="thumb"></div>
          </div>
        </div>
      </div>

      <div class="find">
        <div class="box">Find in page</div>
        <div class="arrows">${chevron("up", 12)}${chevron("down", 12)}</div>
        <div class="check c1"><i></i><span>Highlight <u>A</u>ll</span></div>
        <div class="check c2"><i></i><span>Match <u>C</u>ase</span></div>
        <div class="check c3"><i></i><span>Match D<u>i</u>acritics</span></div>
        <div class="check"><i></i><span><u>W</u>hole Words</span></div>
        <div class="grow"></div>
        ${cross(5)}
      </div>`;
  }
}
